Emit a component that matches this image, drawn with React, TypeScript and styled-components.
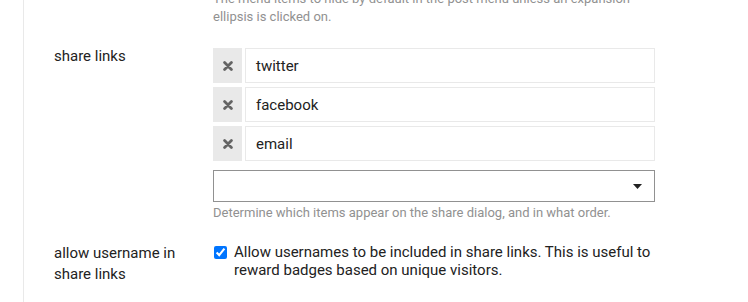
import React from "react";
import styled, { createGlobalStyle } from "styled-components";

const GlobalStyle = createGlobalStyle`
  html, body {
    margin: 0;
    padding: 0;
    background: #ffffff;
    overflow: hidden;
  }
  body {
    font-family: Roboto, "Liberation Sans", Arial, sans-serif;
    color: #222222;
  }
`;

const Page = styled.div`
  padding-left: 23px;
  margin-top: -10px;
  height: 330px;
`;

const Panel = styled.div`
  border-left: 1px solid #e9e9e9;
  padding-left: 30px;
  height: 100%;
`;

const Setting = styled.div<{ $gap: number }>`
  display: grid;
  grid-template-columns: 159px 442px;
  margin-top: ${(p) => p.$gap}px;
`;

const Label = styled.div<{ $lift?: number }>`
  font-size: 15px;
  line-height: 21px;
  width: 140px;
  margin-top: ${(p) => -(p.$lift ?? 0)}px;
`;

const Value = styled.div`
  display: flex;
  flex-direction: column;
`;

const Help = styled.div<{ $top?: number }>`
  font-size: 13px;
  line-height: 18px;
  color: #919191;
  margin-top: ${(p) => p.$top ?? 0}px;
`;

const List = styled.div`
  display: flex;
  flex-direction: column;
  gap: 4px;
`;

const ListRow = styled.div`
  display: flex;
  gap: 3px;
  height: 35px;
`;

const RemoveButton = styled.button`
  width: 29px;
  flex: none;
  border: none;
  background: #e9e9e9;
  color: #646464;
  display: flex;
  align-items: center;
  justify-content: center;
  padding: 0;
  margin: 0;
  cursor: pointer;
`;

const ListInput = styled.div`
  flex: 1;
  box-sizing: border-box;
  border: 1px solid #e9e9e9;
  padding: 0 10px;
  display: flex;
  align-items: center;
  font-size: 15px;
  color: #222222;
`;

const SelectBox = styled.div`
  margin-top: 9px;
  box-sizing: border-box;
  height: 32px;
  border: 1px solid #919191;
  display: flex;
  align-items: center;
  justify-content: flex-end;
  padding-right: 12px;
`;

const CheckRow = styled.label`
  display: flex;
  align-items: flex-start;
  font-size: 15px;
  line-height: 18px;
  color: #222222;
`;

const CheckBox = styled.input`
  width: 13px;
  height: 13px;
  margin: 3px 7px 0 1px;
  flex: none;
`;

const TimesIcon = () => (
  <svg width="10" height="10" viewBox="0 0 10 10" aria-hidden="true">
    <path
      d="M1.6 1.6 L8.4 8.4 M8.4 1.6 L1.6 8.4"
      stroke="currentColor"
      strokeWidth="2.8"
      strokeLinecap="round"
    />
  </svg>
);

const CaretIcon = () => (
  <svg width="9" height="5" viewBox="0 0 9 5" aria-hidden="true">
    <path d="M0 0 H9 L4.5 5 Z" fill="#222222" />
  </svg>
);

const links = ["twitter", "facebook", "email"];

export default function App() {
  return (
    <>
      <GlobalStyle />
      <Page>
        <Panel>
          <Setting $gap={0}>
            <Label />
            <Help>
              The menu items to hide by default in the post menu unless an expansion ellipsis is
              clicked on.
            </Help>
          </Setting>
          <Setting $gap={22}>
            <Label $lift={2}>share links</Label>
            <Value>
              <List>
                {links.map((l) => (
                  <ListRow key={l}>
                    <RemoveButton type="button">
                      <TimesIcon />
                    </RemoveButton>
                    <ListInput>{l}</ListInput>
                  </ListRow>
                ))}
              </List>
              <SelectBox>
                <CaretIcon />
              </SelectBox>
              <Help $top={2}>Determine which items appear on the share dialog, and in what order.</Help>
            </Value>
          </Setting>
          <Setting $gap={21}>
            <Label>allow username in share links</Label>
            <Value>
              <CheckRow>
                <CheckBox type="checkbox" defaultChecked />
                <span>
                  Allow usernames to be included in share links. This is useful to reward badges
                  based on unique visitors.
                </span>
              </CheckRow>
            </Value>
          </Setting>
        </Panel>
      </Page>
    </>
  );
}
